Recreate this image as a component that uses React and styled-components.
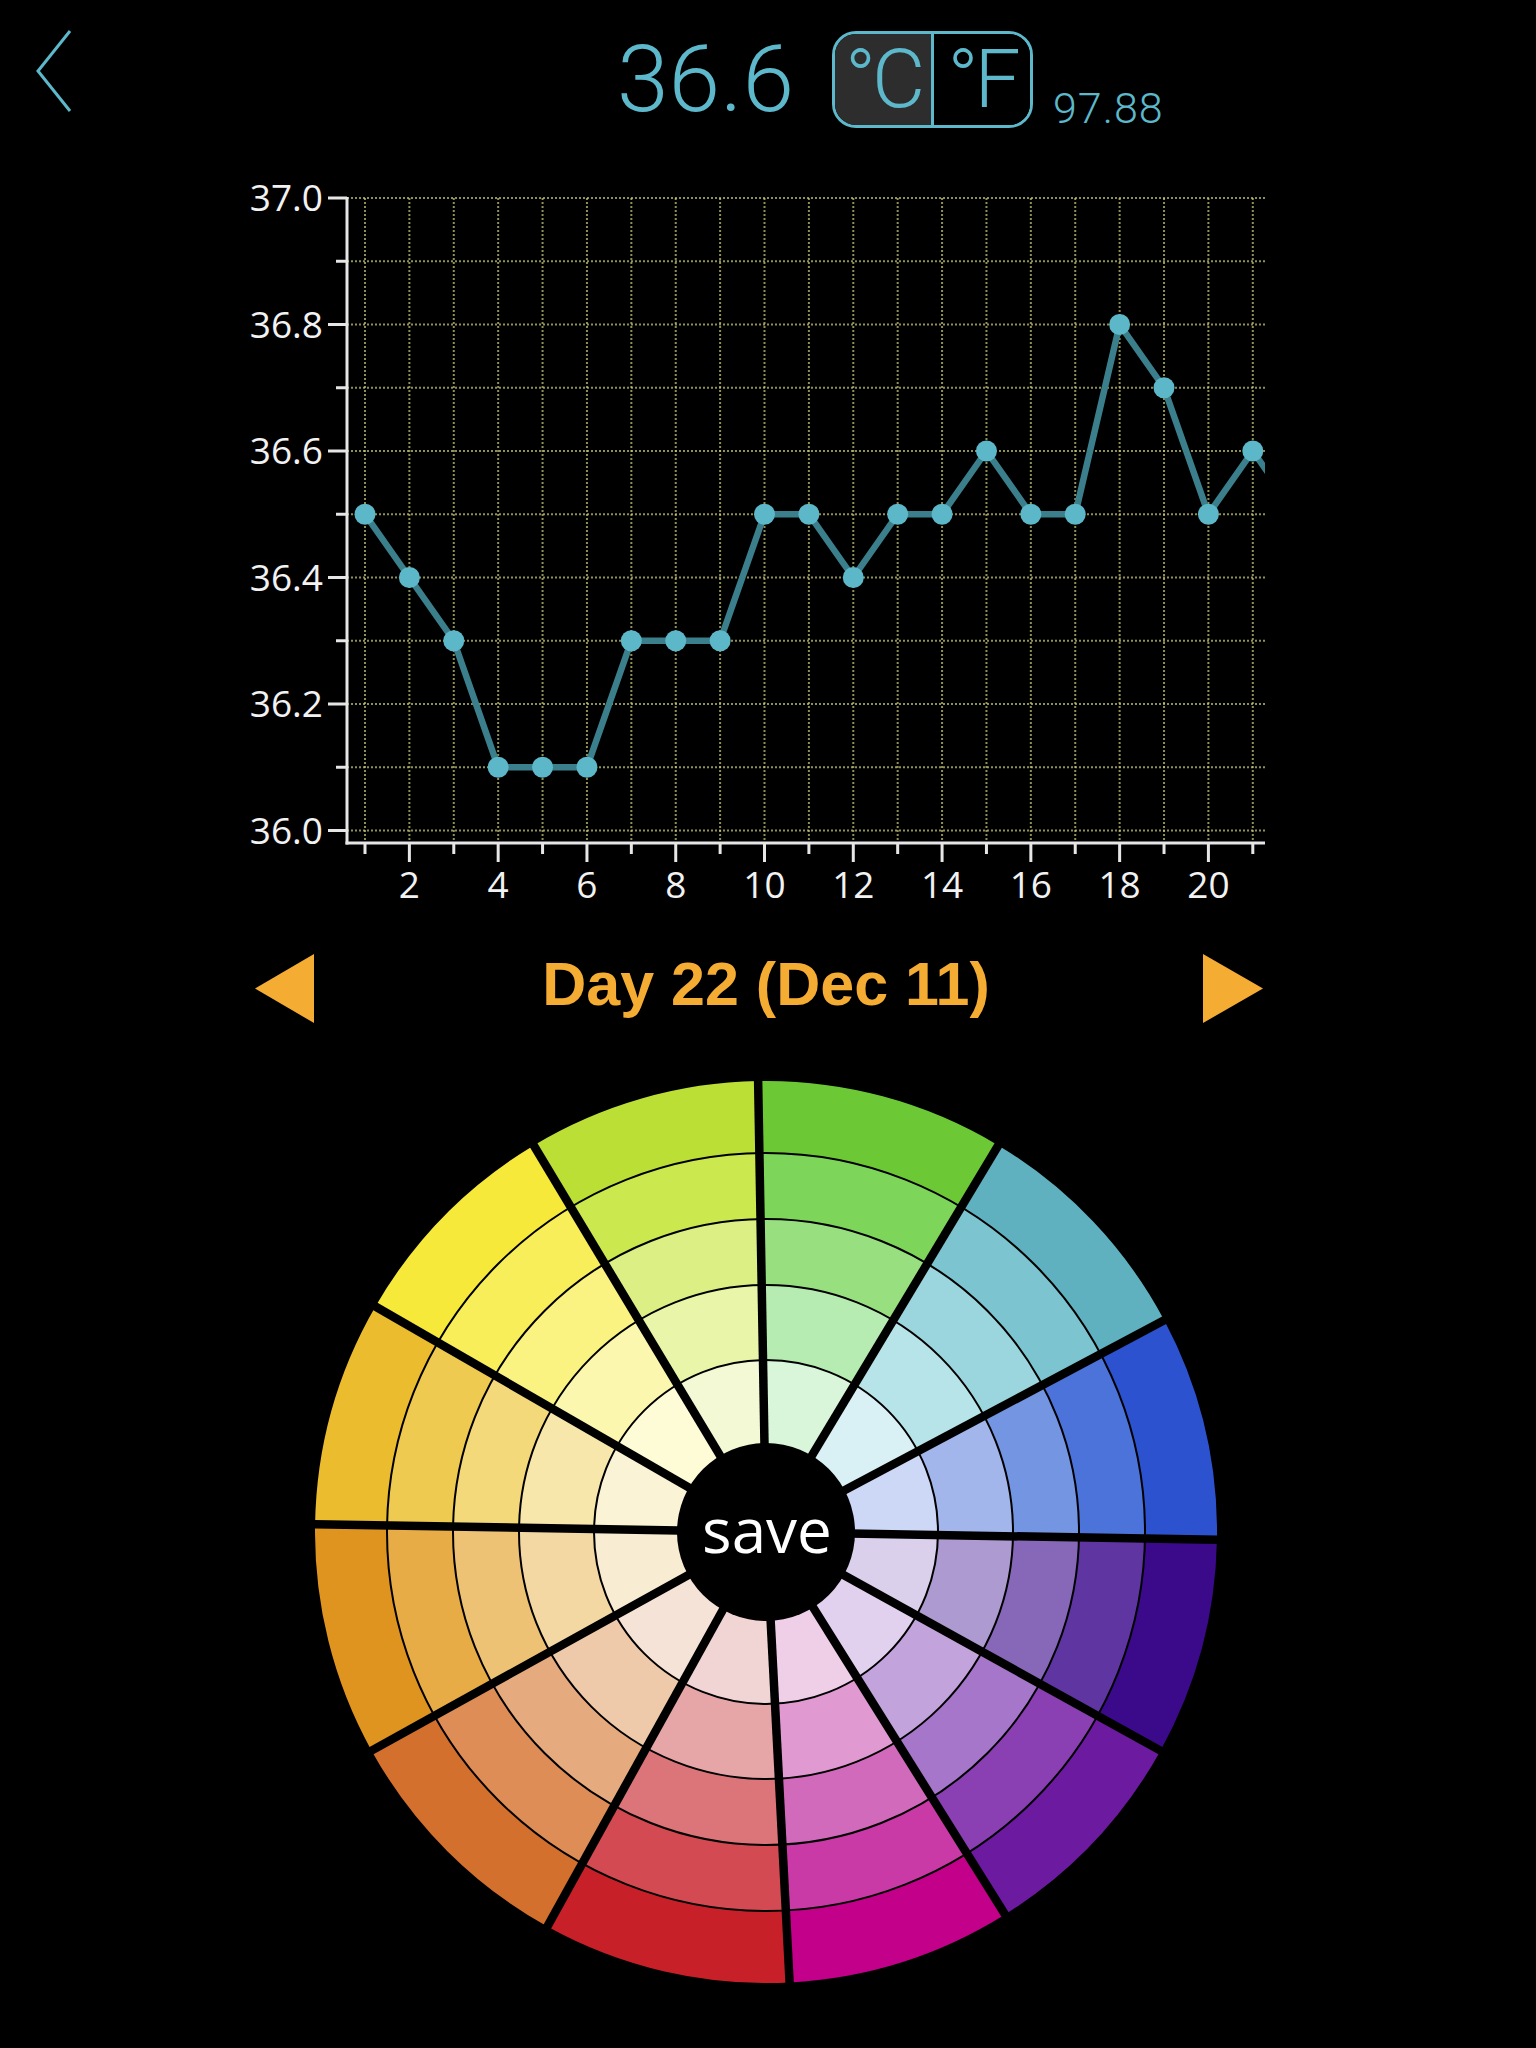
import React from 'react';
import styled, { createGlobalStyle } from 'styled-components';

const TEAL = '#5cb8ca';
const ORANGE = '#f5ac33';

const GlobalStyle = createGlobalStyle`
  html, body {
    margin: 0;
    padding: 0;
    background: #000;
  }
  body {
    font-family: "Roboto", "Liberation Sans", sans-serif;
  }
`;

const Page = styled.div`
  width: 1536px;
  min-height: 2048px;
  background: #000;
  overflow: hidden;
`;

const Header = styled.header`
  display: flex;
  align-items: flex-start;
  height: 128px;
  padding: 31px 0 0 35px;
  box-sizing: border-box;
`;

const BackButton = styled.button`
  display: block;
  width: 38px;
  height: 84px;
  margin-top: -2px;
  padding: 0;
  border: 0;
  background: none;
  cursor: pointer;
`;

const TempValue = styled.div`
  margin-left: 544px;
  font-family: "Roboto", "Liberation Sans", sans-serif;
  font-weight: 300;
  font-size: 93px;
  line-height: 97px;
  color: ${TEAL};
`;

const UnitToggle = styled.div`
  display: flex;
  margin-left: 38px;
  width: 201px;
  height: 97px;
  box-sizing: border-box;
  border: 3px solid ${TEAL};
  border-radius: 24px;
  overflow: hidden;
`;

const UnitOption = styled.button`
  flex: 1;
  display: flex;
  justify-content: center;
  padding: 0;
  border: 0;
  border-left: ${({ $first }) => ($first ? '0' : `3px solid ${TEAL}`)};
  background: ${({ $active }) => ($active ? '#2d2d2d' : '#000')};
  color: ${TEAL};
  font-family: "Roboto", "Liberation Sans", sans-serif;
  font-weight: 300;
  font-size: 82px;
  line-height: 91px;
  letter-spacing: -4px;
  white-space: nowrap;
  cursor: pointer;
`;

const Fahrenheit = styled.div`
  margin: 56px 0 0 20px;
  font-family: "Roboto", "Liberation Sans", sans-serif;
  font-weight: 300;
  font-size: 43px;
  line-height: 43px;
  letter-spacing: 1px;
  color: ${TEAL};
`;

const ChartSection = styled.section`
  margin-top: 42px;
`;

const ChartSvg = styled.svg`
  display: block;
  font-family: "Open Sans", "Liberation Sans", sans-serif;
`;

const DayNav = styled.nav`
  display: grid;
  grid-template-columns: 59px 1fr 60px;
  align-items: center;
  width: 1008px;
  height: 69px;
  margin: 43px 0 0 255px;
`;

const ArrowButton = styled.button`
  display: block;
  width: ${({ $w }) => $w}px;
  height: 69px;
  padding: 0;
  border: 0;
  background: none;
  cursor: pointer;
`;

const DayTitle = styled.div`
  padding-left: 15px;
  margin-bottom: 8px;
  text-align: center;
  font-family: "Liberation Sans", Arial, sans-serif;
  font-weight: 700;
  font-size: 61px;
  line-height: 63px;
  color: ${ORANGE};
`;

const WheelWrap = styled.div`
  display: flex;
  margin: 59px 0 0 315px;
`;

const WheelSvg = styled.svg`
  display: block;
  cursor: pointer;
`;

// chart geometry
const X0 = 365;
const DX = 44.39;
const Y_TOP = 198;
const PER_DEG = 632.5;
const AX_X = 347;
const AX_Y = 843;
const PLOT_RIGHT = 1265;

const xOf = (d) => X0 + (d - 1) * DX;
const yOf = (v) => Y_TOP + (37 - v) * PER_DEG;

const temps = [
  36.5, 36.4, 36.3, 36.1, 36.1, 36.1, 36.3, 36.3, 36.3, 36.5, 36.5,
  36.4, 36.5, 36.5, 36.6, 36.5, 36.5, 36.8, 36.7, 36.5, 36.6, 36.5,
];

const GRID = 'rgba(205, 205, 120, 0.7)';

const TempChart = () => {
  const yTicks = Array.from({ length: 11 }, (_, i) => 36 + i * 0.1);
  const days = Array.from({ length: 21 }, (_, i) => i + 1);
  const line = temps.map((v, i) => `${xOf(i + 1)},${yOf(v)}`).join(' ');

  return (
    <ChartSvg width="1536" height="740" viewBox="0 170 1536 740">
      <defs>
        <clipPath id="plot">
          <rect x={AX_X} y={170} width={PLOT_RIGHT - AX_X} height={AX_Y - 170} />
        </clipPath>
      </defs>

      {yTicks.map((v) => (
        <line key={`h${v}`} x1={AX_X} x2={PLOT_RIGHT} y1={yOf(v)} y2={yOf(v)}
          stroke={GRID} strokeWidth="2" strokeDasharray="2 2" />
      ))}
      {days.map((d) => (
        <line key={`v${d}`} x1={xOf(d)} x2={xOf(d)} y1={Y_TOP} y2={AX_Y}
          stroke={GRID} strokeWidth="2" strokeDasharray="2 2" />
      ))}

      <g stroke="#e6e6e6" strokeWidth="3">
        <line x1={AX_X} x2={AX_X} y1={Y_TOP - 1} y2={AX_Y + 1.5} />
        <line x1={AX_X - 1.5} x2={PLOT_RIGHT} y1={AX_Y} y2={AX_Y} />
        {yTicks.map((v, i) => (
          <line key={`yt${i}`} x1={i % 2 === 0 ? AX_X - 19 : AX_X - 11} x2={AX_X}
            y1={yOf(v)} y2={yOf(v)} />
        ))}
        {days.map((d) => (
          <line key={`xt${d}`} x1={xOf(d)} x2={xOf(d)} y1={AX_Y}
            y2={d % 2 === 0 ? AX_Y + 19 : AX_Y + 11} />
        ))}
      </g>

      <g fill="#f2f2f2" fontSize="37">
        {yTicks.filter((_, i) => i % 2 === 0).map((v) => (
          <text key={`yl${v}`} x={AX_X - 24} y={yOf(v) + 13} textAnchor="end">
            {v.toFixed(1)}
          </text>
        ))}
        {days.filter((d) => d % 2 === 0).map((d) => (
          <text key={`xl${d}`} x={xOf(d)} y={898} textAnchor="middle">{d}</text>
        ))}
      </g>

      <g clipPath="url(#plot)">
        <polyline points={line} fill="none" stroke="#3a7f8b" strokeWidth="6.5"
          strokeLinejoin="round" />
        {temps.map((v, i) => (
          <circle key={`p${i}`} cx={xOf(i + 1)} cy={yOf(v)} r="10.5" fill="#5cb8c8" />
        ))}
      </g>
    </ChartSvg>
  );
};

// colour wheel: outer ring first
const WHEEL = [
  ['#6cc935', '#7dd55a', '#98e07f', '#b6ecb1', '#d9f6da'],
  ['#60b1c0', '#7cc5d0', '#9bd5dd', '#b7e4e9', '#d9f1f5'],
  ['#2d52cf', '#4c73da', '#7495e2', '#a2b6ec', '#cdd7f6'],
  ['#3a0a8a', '#5f35a1', '#8667b8', '#ac9ad0', '#dad0ec'],
  ['#6c1aa0', '#8a40b3', '#a576c9', '#c3a3db', '#e1d1ee'],
  ['#c2008a', '#c93aa6', '#d26abc', '#e19ad1', '#efcee8'],
  ['#c82029', '#d34a52', '#dc757a', '#e6a5a7', '#f1d4d4'],
  ['#d4702e', '#de8d56', '#e6aa7f', '#eecaaa', '#f6e3d7'],
  ['#df941f', '#e7ac46', '#edc275', '#f3d8a4', '#f8ecd3'],
  ['#ebbc2d', '#efca51', '#f3d97a', '#f7e7aa', '#fbf3d6'],
  ['#f6e93a', '#f8ee5a', '#faf381', '#fcf7ae', '#fefbd7'],
  ['#bcdf36', '#cce84f', '#dcef84', '#e9f5a8', '#f3f9d5'],
];
const SPOKES = [-1, 31, 62, 91, 119, 148, 177, 209, 241, 271, 300, 329, 359];
const RADII = [451, 379, 313, 247, 172, 80];
const HOLE = 89;

const pt = (r, deg) => {
  const a = (deg * Math.PI) / 180;
  return [r * Math.sin(a), -r * Math.cos(a)];
};

const sector = (r0, r1, a0, a1) => {
  const [x1, y1] = pt(r1, a0);
  const [x2, y2] = pt(r1, a1);
  const [x3, y3] = pt(r0, a1);
  const [x4, y4] = pt(r0, a0);
  return `M${x1} ${y1} A${r1} ${r1} 0 0 1 ${x2} ${y2} L${x3} ${y3} A${r0} ${r0} 0 0 0 ${x4} ${y4} Z`;
};

const ColorWheel = () => (
  <WheelSvg width="902" height="902" viewBox="-451 -451 902 902">
    {WHEEL.map((ring, s) =>
      ring.map((color, r) => (
        <path key={`${s}-${r}`} d={sector(RADII[r + 1], RADII[r], SPOKES[s], SPOKES[s + 1])}
          fill={color} />
      ))
    )}
    {RADII.slice(1, 5).map((r) => (
      <circle key={`ring${r}`} r={r} fill="none" stroke="#000" strokeWidth="2" />
    ))}
    {SPOKES.slice(0, 12).map((a) => {
      const [x, y] = pt(452, a);
      return <line key={`sp${a}`} x1="0" y1="0" x2={x} y2={y} stroke="#000" strokeWidth="8.5" />;
    })}
    <circle r={HOLE} fill="#000" />
    <text x="1" y="21" textAnchor="middle" fill="#fff" fontSize="62"
      fontFamily='"Open Sans", "Liberation Sans", sans-serif' fontWeight="400">
      save
    </text>
  </WheelSvg>
);

export default function App() {
  return (
    <Page>
      <GlobalStyle />
      <Header>
        <BackButton aria-label="Back">
          <svg width="38" height="84" viewBox="0 0 38 84">
            <polyline points="35,2 3,42 35,82" fill="none" stroke={TEAL} strokeWidth="3" />
          </svg>
        </BackButton>
        <TempValue>36.6</TempValue>
        <UnitToggle>
          <UnitOption $first $active>°C</UnitOption>
          <UnitOption>°F</UnitOption>
        </UnitToggle>
        <Fahrenheit>97.88</Fahrenheit>
      </Header>

      <ChartSection>
        <TempChart />
      </ChartSection>

      <DayNav>
        <ArrowButton $w={59} aria-label="Previous day">
          <svg width="59" height="69" viewBox="0 0 59 69">
            <polygon points="0,34.5 59,0 59,69" fill={ORANGE} />
          </svg>
        </ArrowButton>
        <DayTitle>Day 22 (Dec 11)</DayTitle>
        <ArrowButton $w={60} aria-label="Next day">
          <svg width="60" height="69" viewBox="0 0 60 69">
            <polygon points="60,34.5 0,0 0,69" fill={ORANGE} />
          </svg>
        </ArrowButton>
      </DayNav>

      <WheelWrap>
        <ColorWheel />
      </WheelWrap>
    </Page>
  );
}
